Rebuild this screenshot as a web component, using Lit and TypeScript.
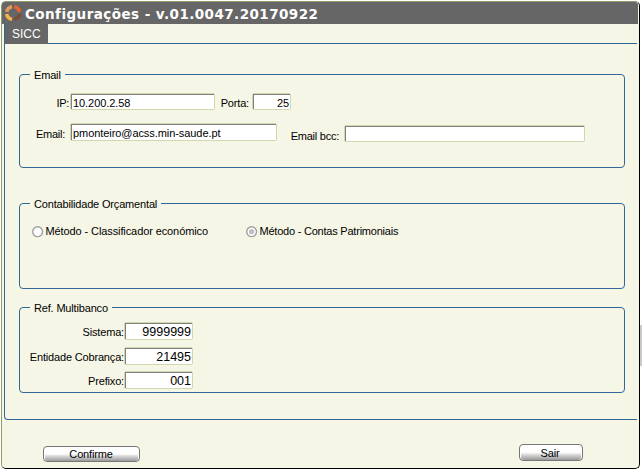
import { LitElement, html, css } from "lit";
import { customElement, property } from "lit/decorators.js";

@customElement("group-box")
class GroupBox extends LitElement {
  @property() label = "";
  static styles = css`
    :host { display: block; box-sizing: border-box; border: 1px solid #336699; border-radius: 4px; }
    .legend { width: max-content; margin: -8px 0 0 10px; padding: 0 4px; height: 15px; line-height: 17px; background: #f6f6e6; white-space: nowrap; }
  `;
  render() {
    return html`<div class="legend">${this.label}</div><slot></slot>`;
  }
}

@customElement("text-box")
class TextBox extends LitElement {
  @property() value = "";
  static styles = css`
    :host { display: block; box-sizing: border-box; height: 17px; border: 1px solid #d2d8ae; border-radius: 2px; flex: none; letter-spacing: -0.07px; }
    .inner { box-sizing: border-box; height: 100%; border-top: 1px solid #808080; border-left: 1px solid #808080; background: #fff; padding: 0 1px; line-height: 16px; white-space: nowrap; }
  `;
  render() {
    return html`<div class="inner">${this.value}</div>`;
  }
}

@customElement("app-root")
export class AppRoot extends LitElement {
  static styles = css`
    :host { display: block; position: relative; width: 642px; height: 471px; overflow: hidden; background: #fff; color: #000; font: 11px/15px "Liberation Sans", Arial, sans-serif; letter-spacing: -0.17px; }
    .window { box-sizing: border-box; width: 639px; height: 468px; margin: 1px 0 0 1px; border: 1px solid #8f9c67; border-right-color: #000; border-bottom-color: #000; border-radius: 5px; background: #f6f6e6; position: absolute; }
    .title { display: flex; height: 22px; width: 636px; background: #666; border-radius: 3px 3px 0 0; color: #fff; font: bold 13.5px/24px "DejaVu Sans", Verdana, sans-serif; letter-spacing: 0.44px; white-space: nowrap; }
    .title svg { flex: none; margin: 2px 3px 0 2px; }
    .panel { box-sizing: border-box; width: 633px; height: 396px; margin-left: 2px; border-left: 1px solid #336699; border-bottom: 1px solid #336699; border-bottom-left-radius: 4px; }
    .tabs { box-sizing: border-box; height: 20px; border-bottom: 1px solid #336699; }
    .tab { width: 43px; height: 20px; box-sizing: border-box; padding-left: 7px; background: #666; color: #fff; font-size: 12px; line-height: 20px; letter-spacing: 0; border-bottom-right-radius: 2px; }
    group-box { width: 606px; margin-left: 14px; }
    .g1 { height: 94px; margin-top: 30px; }
    .g2 { height: 86px; margin-top: 35px; }
    .g3 { height: 86px; margin-top: 18px; }
    .row { display: flex; align-items: flex-start; white-space: nowrap; }
    .lab { flex: none; text-align: right; box-sizing: border-box; }
    .r1 { margin-top: 11px; }
    .r2 { margin-top: 12px; }
    .r1 .lab { padding: 3px 3px 0 0; }
    .r1 .c1 { padding-right: 1px; letter-spacing: -0.3px; }
    .r2 .lab { padding: 4px 5px 0 0; letter-spacing: -0.25px; }
    .r2 .c3 { padding-top: 6px; }
    .r2 .email { height: 18px; }
    .r2 .bcc { margin-top: 2px; }
    .c1 { width: 50px; }
    .c2 { width: 37px; }
    .c3 { width: 67px; }
    .ip { width: 145px; }
    .port { width: 39px; text-align: right; }
    .email { width: 207px; }
    .bcc { width: 241px; }
    .radios { margin-top: 12px; }
    .radios svg { flex: none; margin-top: 3px; }
    .radios .choice { display: flex; }
    .first { width: 214px; margin-left: 12px; letter-spacing: -0.1px; }
    .second { letter-spacing: -0.22px; }
    .radios span { margin-left: 1.5px; padding-top: 1px; }
    .refs { margin-top: 7px; }
    .refs .row { height: 24.6px; }
    .refs .lab { width: 104px; padding-top: 3px; }
    .refs text-box { width: 69px; height: 18px; text-align: right; font-size: 12.5px; letter-spacing: 0; }
    .buttons { display: flex; align-items: flex-start; margin-top: 24px; }
    .btn { box-sizing: border-box; height: 16px; border: 1px solid #777; border-radius: 4px; background: linear-gradient(#fff 0%, #fdfdfd 50%, #d8d8d8 65%, #999 100%); text-align: center; line-height: 15px; box-shadow: inset 1px 0 #fff, inset -1px 0 #fff; }
    .confirm { width: 97px; margin: 2px 0 0 41px; padding-right: 1px; }
    .exit { width: 64px; height: 17px; margin-left: 379px; padding-right: 2px; line-height: 16px; }
    .strip { position: absolute; left: 640px; top: 325px; width: 2px; height: 41px; background: #c9c9c9; }
  `;
  radio(on: boolean) {
    return html`<svg width="12" height="12" viewBox="0 0 12 12">
      <circle cx="5.6" cy="5.7" r="4.9" fill="#fff" stroke="#a0a0a0" stroke-width="1.4"/>
      <circle cx="5.6" cy="5.7" r="2.6" fill=${on ? "#c0c0c0" : "none"}/>
    </svg>`;
  }
  render() {
    return html`
      <div class="window">
        <div class="title">
          <svg width="18" height="18" viewBox="0 0 18 18" fill="none" stroke-width="3.6">
            <path d="M8 2.7 A6.5 6.5 0 0 0 2.7 7.8" stroke="#e39a5c"/>
            <path d="M10.4 2.7 A6.5 6.5 0 0 1 15.6 7.8" stroke="#ea622e"/>
            <path d="M2.7 10 A6.5 6.5 0 0 0 8 15.3" stroke="#f7b24c"/>
            <path d="M15.6 10 A6.5 6.5 0 0 1 10.4 15.3" stroke="#7a4c3a"/>
          </svg><span>Configurações - v.01.0047.20170922</span>
        </div>
        <div class="panel">
          <div class="tabs"><div class="tab">SICC</div></div>
          <group-box class="g1" label="Email">
            <div class="row r1">
              <div class="lab c1">IP:</div>
              <text-box class="ip" value="10.200.2.58"></text-box>
              <div class="lab c2">Porta:</div>
              <text-box class="port" value="25"></text-box>
            </div>
            <div class="row r2">
              <div class="lab c1">Email:</div>
              <text-box class="email" value="pmonteiro@acss.min-saude.pt"></text-box>
              <div class="lab c3">Email bcc:</div>
              <text-box class="bcc"></text-box>
            </div>
          </group-box>
          <group-box class="g2" label="Contabilidade Orçamental">
            <div class="row radios">
              <div class="choice first">${this.radio(false)}<span>Método - Classificador económico</span></div>
              <div class="choice second">${this.radio(true)}<span>Método - Contas Patrimoniais</span></div>
            </div>
          </group-box>
          <group-box class="g3" label="Ref. Multibanco">
            <div class="refs">
              ${[["Sistema:", "9999999"], ["Entidade Cobrança:", "21495"], ["Prefixo:", "001"]].map(
                ([l, v]) => html`<div class="row"><div class="lab">${l}</div><text-box value=${v}></text-box></div>`
              )}
            </div>
          </group-box>
        </div>
        <div class="buttons"><div class="btn confirm">Confirme</div><div class="btn exit">Sair</div></div>
      </div>
      <div class="strip"></div>
    `;
  }
}
